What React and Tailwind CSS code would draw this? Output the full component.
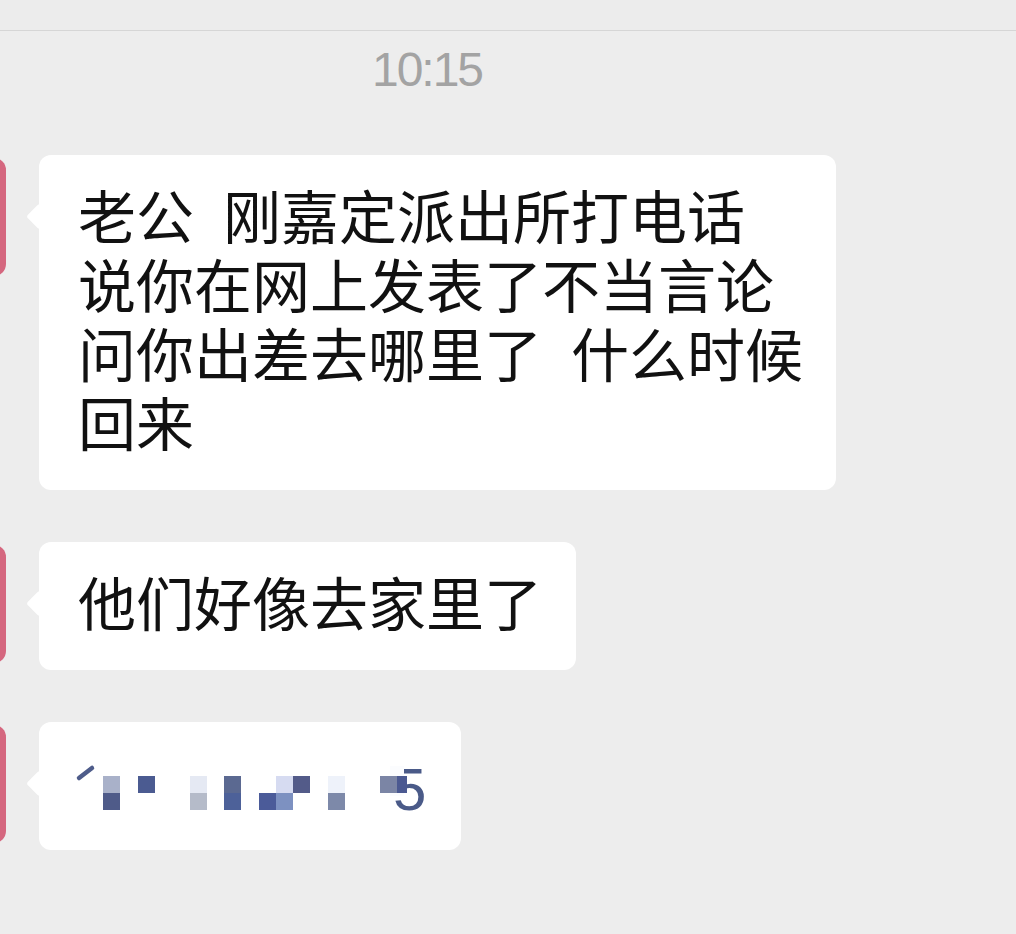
const CJK = { fontFamily: '"Noto Sans CJK SC", "Noto Sans", sans-serif' };

function Avatar() {
    return <div className="shrink-0 w-[118px] h-[118px] ml-[-112px] mt-[3px] rounded-[12px] bg-[#d5677f]" />;
}

function Bubble({ children, className = "" }) {
    return (
        <div className={`relative ml-[33px] bg-white rounded-[12px] pl-[39px] pt-[25px] pb-[34px] ${className}`}>
            {/* tail */}
            <div className="absolute left-[-9px] top-[52px] w-[19px] h-[19px] bg-white rotate-45 rounded-[3px]" />
            <div className="relative">{children}</div>
        </div>
    );
}

function Row({ children, className = "" }) {
    return <div className={`flex items-start ${className}`}>{children}</div>;
}

const gap = <span className="inline-block w-[29px]" />;

// mosaic that hides the number in the last message
function Mosaic() {
    const blocks = [
        [25, 29, 17, "#a9b1c9"], [60, 29, 17, "#4b5b91"], [112, 29, 17, "#e5e9f3"],
        [146, 29, 17, "#5b6991"], [198, 29, 17, "#d6dbf1"], [215, 29, 17, "#535b89"],
        [250, 29, 17, "#eef2fa"], [302, 29, 17, "#7b85a5"], [319, 29, 10, "#4b5991"],
        [25, 46, 17, "#4f5b89"], [112, 46, 17, "#b5bbc9"], [146, 46, 17, "#4d6199"],
        [181, 46, 17, "#4b5b99"], [198, 46, 17, "#7d91c1"], [250, 46, 17, "#7d89a9"],
    ];
    return (
        <svg width="344" height="69" viewBox="0 0 344 69" className="block overflow-visible">
            <text x="315" y="63" fontSize="60" fill="#4a5a88" fontFamily="Liberation Sans, sans-serif">5</text>
            <rect x="312" y="19" width="14" height="30" fill="#fbfcfe" />
            <line x1="1" y1="31" x2="14" y2="21" stroke="#4e5c8a" strokeWidth="4.5" strokeLinecap="round" />
            {blocks.map(([x, y, w, c], i) => (
                <rect key={i} x={x} y={y} width={w} height="17" fill={c} />
            ))}
        </svg>
    );
}

export default function App() {
    return (
        <div className="w-[1016px] h-[934px] overflow-hidden bg-[#ededed]" style={CJK}>
            {/* top bar edge */}
            <div className="h-[31px] bg-[#ececec] border-b border-[#d6d6d6]" />

            <div
                className="w-[854px] mt-[15px] text-center text-[48px] leading-[48px] tracking-[-2px] text-[#a3a3a3]"
                style={{ fontFamily: '"Liberation Sans", Arial, sans-serif' }}
            >
                10:15
            </div>

            <div className="mt-[61px] flex flex-col gap-[52px]">
                <Row>
                    <Avatar />
                    <Bubble className="w-[797px]">
                        <div className="text-[58px] leading-[69px] text-[#111] whitespace-nowrap">
                            <div>老公{gap}刚嘉定派出所打电话</div>
                            <div>说你在网上发表了不当言论</div>
                            <div>问你出差去哪里了{gap}什么时候</div>
                            <div>回来</div>
                        </div>
                    </Bubble>
                </Row>

                <Row>
                    <Avatar />
                    <Bubble className="w-[537px]">
                        <div className="text-[58px] leading-[69px] text-[#111] whitespace-nowrap">
                            他们好像去家里了
                        </div>
                    </Bubble>
                </Row>

                <Row>
                    <Avatar />
                    <Bubble className="w-[422px]">
                        <Mosaic />
                    </Bubble>
                </Row>
            </div>
        </div>
    );
}
